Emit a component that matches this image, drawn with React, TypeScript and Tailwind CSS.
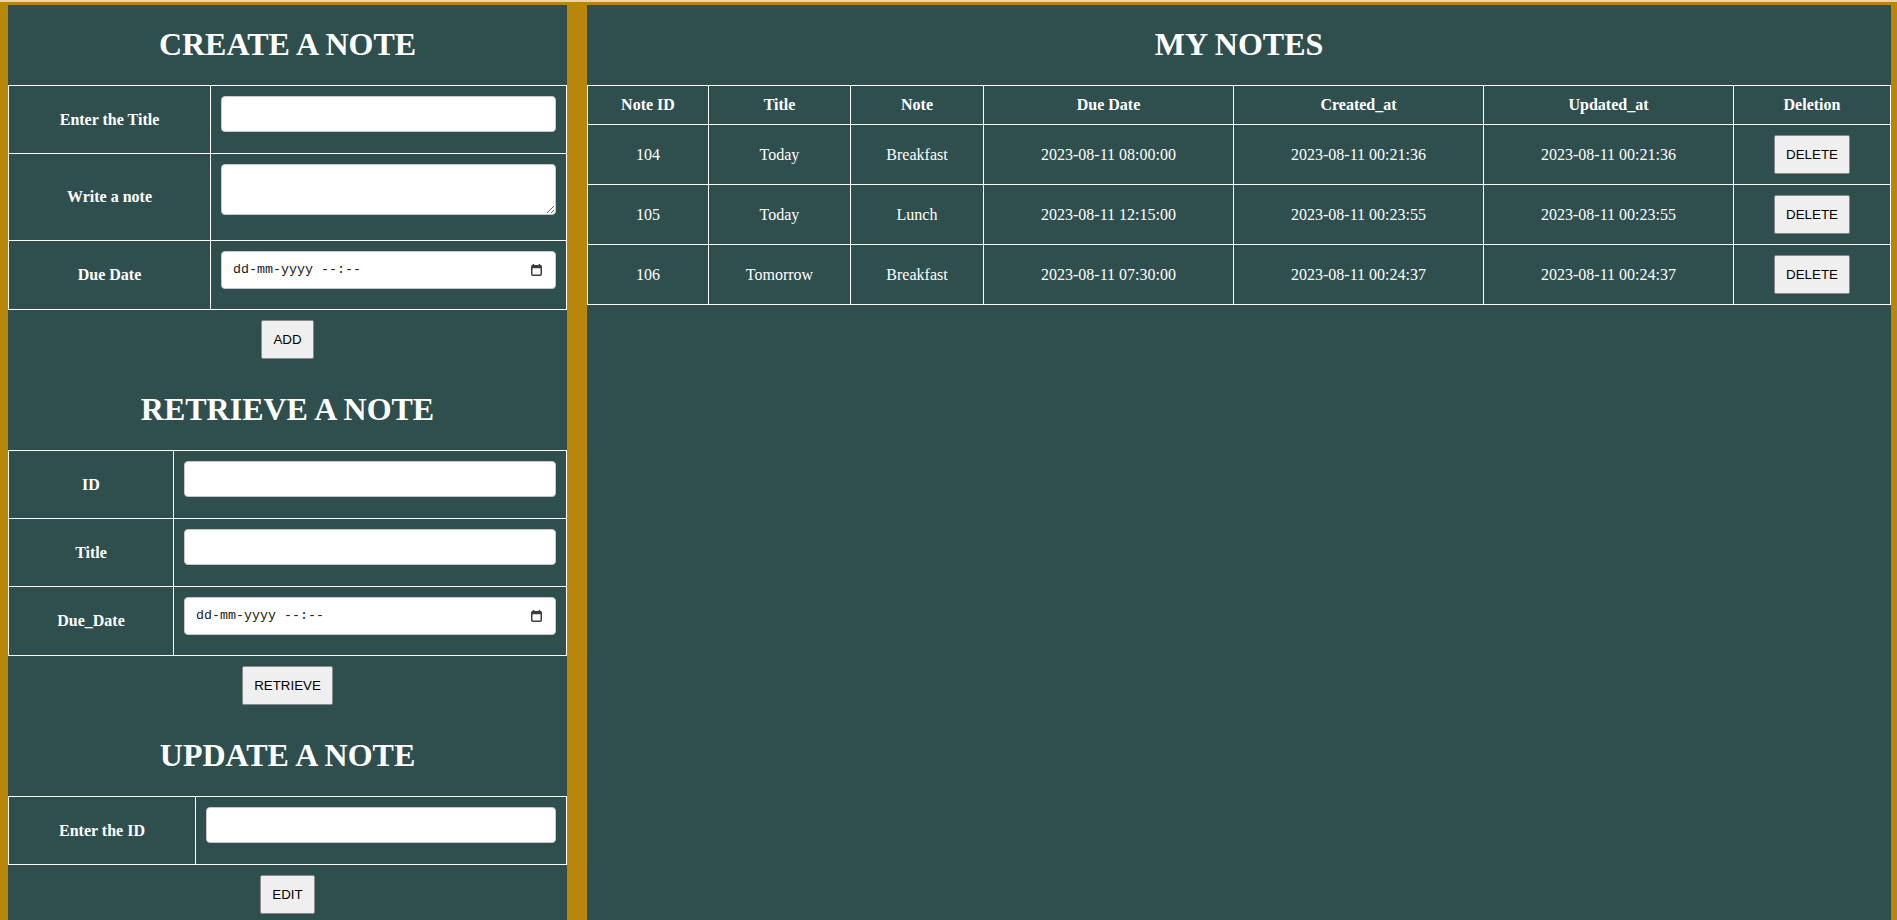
import React from "react";

const serif = "font-['Liberation_Serif','Times_New_Roman',serif]";
const sans = "font-['Liberation_Sans',Arial,sans-serif]";
const mono = "font-['Liberation_Mono','Courier_New',monospace]";

type Note = {
  id: number;
  title: string;
  note: string;
  due: string;
  created: string;
  updated: string;
};

const notes: Note[] = [
  { id: 104, title: "Today", note: "Breakfast", due: "2023-08-11 08:00:00", created: "2023-08-11 00:21:36", updated: "2023-08-11 00:21:36" },
  { id: 105, title: "Today", note: "Lunch", due: "2023-08-11 12:15:00", created: "2023-08-11 00:23:55", updated: "2023-08-11 00:23:55" },
  { id: 106, title: "Tomorrow", note: "Breakfast", due: "2023-08-11 07:30:00", created: "2023-08-11 00:24:37", updated: "2023-08-11 00:24:37" },
];

const Btn = ({ label }: { label: string }) => (
  <button className={`${sans} text-[13.33px] leading-[17px] text-black bg-[#efefef] border border-[#8a8a8a] rounded-[2px] px-[11px] py-[10px]`}>
    {label}
  </button>
);

const Heading = ({ children }: { children: React.ReactNode }) => (
  <h1 className="text-[32px] leading-[37px] font-bold text-white text-center mt-[21px] mb-[22px]">{children}</h1>
);

const TextInput = () => (
  <input type="text" className="block w-full h-[36px] bg-white border border-[#c8c8c8] rounded-[4px] mb-[10px] outline-none" />
);

const DateInput = () => (
  <div className="flex items-center justify-between w-full h-[38px] bg-white border border-[#c8c8c8] rounded-[4px] mb-[9px] pl-[11px] pr-[13px]">
    <span className={`${mono} text-[13.33px] text-[#1a1a1a] whitespace-pre`}>dd-mm-yyyy --:--</span>
    <svg width="11" height="12" viewBox="0 0 11 12">
      <path d="M2.5 0v2M8.5 0v2" stroke="#3c3c3c" strokeWidth="1.5" />
      <rect x="0.75" y="1.75" width="9.5" height="9.5" rx="1" fill="none" stroke="#3c3c3c" strokeWidth="1.5" />
      <rect x="0.75" y="1.75" width="9.5" height="2.5" fill="#3c3c3c" />
    </svg>
  </div>
);

const FormRow = ({ label, children }: { label: string; children: React.ReactNode }) => (
  <tr>
    <th className="border border-white text-[16px] font-bold text-white align-middle">{label}</th>
    <td className="border border-white px-[10px] pt-[10px] pb-[11px] align-top">{children}</td>
  </tr>
);

const ButtonBar = ({ label }: { label: string }) => (
  <div className="flex justify-center pt-[10px] pb-[11px]">
    <Btn label={label} />
  </div>
);

const LeftPanel = () => (
  <div className={`${serif} w-[559px] shrink-0 bg-[#2f4f4f] pb-[12px]`}>
    <Heading>CREATE A NOTE</Heading>
    <table className="w-full border-collapse table-fixed">
      <colgroup>
        <col className="w-[202px]" />
        <col />
      </colgroup>
      <tbody>
        <FormRow label="Enter the Title">
          <TextInput />
        </FormRow>
        <FormRow label="Write a note">
          <textarea className="block w-full h-[51px] bg-white border border-[#c8c8c8] rounded-[4px] mb-[14px] outline-none" />
        </FormRow>
        <FormRow label="Due Date">
          <DateInput />
        </FormRow>
      </tbody>
    </table>
    <ButtonBar label="ADD" />

    <Heading>RETRIEVE A NOTE</Heading>
    <table className="w-full border-collapse table-fixed">
      <colgroup>
        <col className="w-[165px]" />
        <col />
      </colgroup>
      <tbody>
        <FormRow label="ID">
          <TextInput />
        </FormRow>
        <FormRow label="Title">
          <TextInput />
        </FormRow>
        <FormRow label="Due_Date">
          <DateInput />
        </FormRow>
      </tbody>
    </table>
    <ButtonBar label="RETRIEVE" />

    <Heading>UPDATE A NOTE</Heading>
    <table className="w-full border-collapse table-fixed">
      <colgroup>
        <col className="w-[187px]" />
        <col />
      </colgroup>
      <tbody>
        <FormRow label="Enter the ID">
          <TextInput />
        </FormRow>
      </tbody>
    </table>
    <ButtonBar label="EDIT" />
  </div>
);

const headers = ["Note ID", "Title", "Note", "Due Date", "Created_at", "Updated_at", "Deletion"];

const NotesPanel = () => (
  <div className={`${serif} flex-1 bg-[#2f4f4f]`}>
    <Heading>MY NOTES</Heading>
    <table className="w-full border-collapse table-fixed text-white text-[16px]">
      <colgroup>
        <col className="w-[121px]" />
        <col className="w-[142px]" />
        <col className="w-[133px]" />
        <col className="w-[250px]" />
        <col className="w-[250px]" />
        <col className="w-[250px]" />
        <col />
      </colgroup>
      <thead>
        <tr>
          {headers.map((h) => (
            <th key={h} className="border border-white py-[10px] leading-[18px] font-bold text-center">{h}</th>
          ))}
        </tr>
      </thead>
      <tbody>
        {notes.map((n) => (
          <tr key={n.id}>
            <td className="border border-white py-[10px] text-center">{n.id}</td>
            <td className="border border-white py-[10px] text-center">{n.title}</td>
            <td className="border border-white py-[10px] text-center">{n.note}</td>
            <td className="border border-white py-[10px] text-center">{n.due}</td>
            <td className="border border-white py-[10px] text-center">{n.created}</td>
            <td className="border border-white py-[10px] text-center">{n.updated}</td>
            <td className="border border-white py-[10px] text-center">
              <Btn label="DELETE" />
            </td>
          </tr>
        ))}
      </tbody>
    </table>
  </div>
);

export default function App() {
  return (
    <div className="min-h-screen flex gap-[20px] bg-[#b8860b] border-t-2 border-[#f2d2a6] pt-[3px] pl-[8px] pr-[6px]">
      <LeftPanel />
      <NotesPanel />
    </div>
  );
}
